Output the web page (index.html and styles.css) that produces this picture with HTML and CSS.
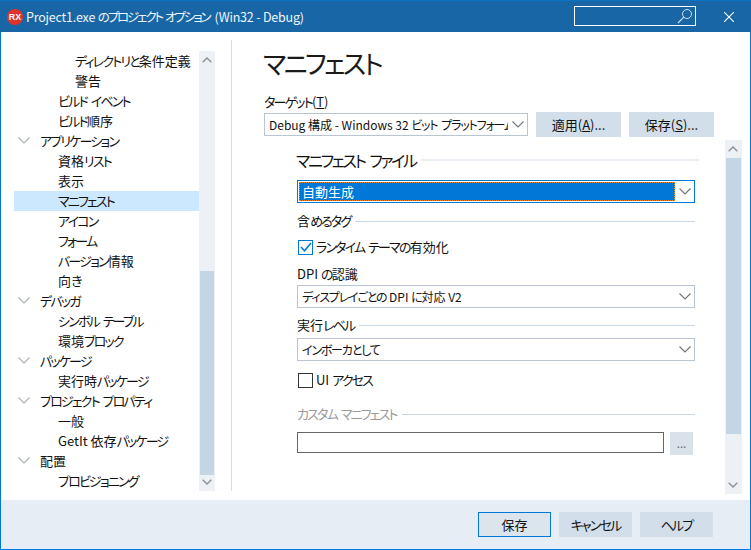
FILE: index.html
```html
<!DOCTYPE html>
<html lang="ja">
<head>
<meta charset="utf-8">
<title>Project1.exe のプロジェクト オプション</title>
<link rel="stylesheet" href="styles.css">
</head>
<body>
<svg class="defs" width="0" height="0"><defs>
<symbol id="chev" viewBox="0 0 12 7"><path d="M.5.5 6 6 11.5.5" fill="none" stroke="currentColor" stroke-width="1.1"/></symbol>
<symbol id="up" viewBox="0 0 10 6"><path d="M.7 5.3 5 1l4.300 4.300" fill="none" stroke="currentColor" stroke-width="1.400"/></symbol>
</defs></svg>
<div class="window">
  <header class="titlebar">
    <span class="logo">RX</span>
    <span class="title">Project1.exe <span class="k">のプロジェクト オプション</span>&nbsp; (Win32 - Debug)</span>
    <div class="search">
      <svg width="16" height="16" viewBox="0 0 16 16"><circle cx="10" cy="6" r="4.500" fill="none" stroke="#cfe0ee" stroke-width="1"/><path d="M6.800 9.200 1 15" stroke="#cfe0ee" stroke-width="1.200"/></svg>
    </div>
    <svg class="close" width="10" height="10" viewBox="0 0 10 10"><path d="M0 0 10 10M10 0 0 10" stroke="#fff" stroke-width="1.100"/></svg>
  </header>
  <div class="main">
    <aside class="nav">
      <ul class="tree">
        <li class="row l2"><span class="k">ディレクトリと</span>条件定義</li>
        <li class="row l2">警告</li>
        <li class="row l1"><span class="k">ビルド イベント</span></li>
        <li class="row l1"><span class="k">ビルド</span>順序</li>
        <li class="row group"><svg class="tw"><use href="#chev"/></svg><span class="k">アプリケーション</span></li>
        <li class="row l1">資格<span class="k">リスト</span></li>
        <li class="row l1">表示</li>
        <li class="row l1 selected"><span class="k">マニフェスト</span></li>
        <li class="row l1"><span class="k">アイコン</span></li>
        <li class="row l1"><span class="k">フォーム</span></li>
        <li class="row l1"><span class="k">バージョン</span>情報</li>
        <li class="row l1">向<span class="k">き</span></li>
        <li class="row group"><svg class="tw"><use href="#chev"/></svg><span class="k">デバッガ</span></li>
        <li class="row l1"><span class="k">シンボル テーブル</span></li>
        <li class="row l1">環境<span class="k">ブロック</span></li>
        <li class="row group"><svg class="tw"><use href="#chev"/></svg><span class="k">パッケージ</span></li>
        <li class="row l1">実行時<span class="k">パッケージ</span></li>
        <li class="row group"><svg class="tw"><use href="#chev"/></svg><span class="k">プロジェクト プロパティ</span></li>
        <li class="row l1">一般</li>
        <li class="row l1">GetIt 依存<span class="k">パッケージ</span></li>
        <li class="row group"><svg class="tw"><use href="#chev"/></svg>配置</li>
        <li class="row l1"><span class="k">プロビジョニング</span></li>
      </ul>
      <div class="sbar nav-sbar">
        <svg class="arrow"><use href="#up"/></svg>
        <div class="track"><div class="thumb"></div></div>
        <svg class="arrow down"><use href="#up"/></svg>
      </div>
    </aside>
    <section class="content">
      <h1 class="heading"><span class="k">マニフェスト</span></h1>
      <div class="target-label"><span class="k">ターゲット</span>(<u>T</u>)</div>
      <div class="target-row">
        <div class="select target-select"><span class="val">Debug 構成 - Windows 32 <span class="k">ビット プラットフォーム</span></span><svg class="chev"><use href="#chev"/></svg></div>
        <button class="btn">適用(<u>A</u>)...</button>
        <button class="btn">保存(<u>S</u>)...</button>
      </div>
      <div class="panel-wrap">
        <div class="panel">
          <div class="legend big"><span><span class="k">マニフェスト ファイル</span></span><i></i></div>
          <div class="select focus"><span class="val sel">自動生成</span><svg class="chev"><use href="#chev"/></svg></div>
          <div class="legend tag"><span>含<span class="k">めるタグ</span></span><i></i></div>
          <label class="check c1"><span class="box on"><svg width="12" height="10" viewBox="0 0 12 10"><path d="M1 5l3.500 3.800L11 1" fill="none" stroke="#0078d7" stroke-width="1.500"/></svg></span><span class="k">ランタイム テーマの</span>有効化</label>
          <div class="plain">DPI <span class="k">の</span>認識</div>
          <div class="select"><span class="val"><span class="k">ディスプレイごとの</span> DPI <span class="k">に</span>対応 V2</span><svg class="chev"><use href="#chev"/></svg></div>
          <div class="legend level"><span>実行<span class="k">レベル</span></span><i></i></div>
          <div class="select"><span class="val"><span class="k">インボーカとして</span></span><svg class="chev"><use href="#chev"/></svg></div>
          <label class="check c2"><span class="box"></span>UI <span class="k sp">アクセス</span></label>
          <div class="legend custom"><span><span class="k">カスタム マニフェスト</span></span><i></i></div>
          <div class="file-row"><div class="input"></div><button class="dots">...</button></div>
        </div>
        <div class="sbar main-sbar">
          <svg class="arrow"><use href="#up"/></svg>
          <div class="track"><div class="thumb"></div></div>
          <svg class="arrow down"><use href="#up"/></svg>
        </div>
      </div>
    </section>
  </div>
  <footer class="footer">
    <button class="btn fbtn default">保存</button>
    <button class="btn fbtn"><span class="k">キャンセル</span></button>
    <button class="btn fbtn"><span class="k">ヘルプ</span></button>
  </footer>
</div>
</body>
</html>
```
FILE: styles.css
```css
* { box-sizing: border-box; }
html, body { margin: 0; padding: 0; }
body {
  width: 751px; height: 550px; overflow: hidden; background: #fff;
  font: 13px/20px "Noto Sans CJK JP", sans-serif;
  font-feature-settings: "palt";
  color: #111;
}
.k { letter-spacing: -.14em; word-spacing: .2em; }
.sp { margin-left: 3px; }
.defs { position: absolute; }
.window {
  width: 751px; height: 550px; display: flex; flex-direction: column;
  border: 1px solid #0078d7; border-top: 0;
}
.titlebar {
  height: 32px; flex: none; margin: 0 -1px; display: flex; align-items: center;
  background: #1866a5; border-top: 1px solid #0a73c4; color: #fff; padding-left: 7px;
}
.logo {
  width: 16px; height: 16px; border-radius: 50%; background: #e3322b; color: #fff;
  font: bold 9px/16px "Liberation Sans", sans-serif; text-align: center; flex: none;
}
.title { margin-left: 3px; white-space: nowrap; flex: 1; color: #eef5fa; font-size: 12.500px; letter-spacing: -.2px; }
.title .k { letter-spacing: -.17em; }
.search {
  width: 122px; height: 20px; border: 1px solid #fff; display: flex; justify-content: flex-end;
  align-items: center; padding-right: 2px; flex: none; margin-top: -1px;
}
.close { margin: 0 17px 0 28px; flex: none; }
.main { flex: 1; display: flex; min-height: 0; }
.nav {
  width: 231px; flex: none; margin: 8px 0 9px; padding: 11px 15px 0 13px;
  border-right: 1px solid #d5dee6; display: flex;
}
.tree { list-style: none; margin: 0; padding: 0; width: 185px; flex: none; }
.row { height: 20px; line-height: 20px; white-space: nowrap; position: relative; }
.l1 { padding-left: 44px; }
.l2 { padding-left: 61px; }
.group { padding-left: 26px; }
.selected { background: #cce8ff; }
.tw { width: 12px; height: 7px; color: #a9b1b8; margin-left: -22px; margin-right: 10px; vertical-align: 2px; }
.sbar { width: 16px; flex: none; background: #edf1f5; display: flex; flex-direction: column; color: #8b9197; }
.arrow { width: 10px; height: 6px; flex: none; margin: 6px 3px 6px; }
.arrow.down { transform: rotate(180deg); }
.track { flex: 1; min-height: 0; }
.thumb { background: #c4d6e6; margin: 0 1px; }
.nav-sbar .track { padding-top: 202px; }
.nav-sbar .thumb { height: 204px; }
.content { flex: 1; min-width: 0; display: flex; flex-direction: column; padding: 0 10px 5px 32px; }
.heading { margin: 14px 0 0 -1px; font-size: 26px; line-height: 34px; font-weight: 400; height: 34px; color: #1a1a1a; }
.heading .k { letter-spacing: -.1em; }
.target-label { margin-top: 12px; height: 20px; }
.target-row { display: flex; align-items: center; gap: 8px; height: 25px; }
.select {
  height: 23px; border: 1px solid #b7c6d2; display: flex; align-items: center; background: #fff;
  padding: 0 3px 0 4px;
}
.select .val { flex: 1; min-width: 0; overflow: hidden; white-space: nowrap; font-size: 12px; }
.select .k { letter-spacing: -.1em; }
.chev { width: 12px; height: 7px; color: #6e7479; flex: none; margin-left: 4px; }
.target-select { width: 264px; }
.btn {
  width: 85px; height: 25px; border: 0; background: #d2deea; color: #111; padding: 0;
  font: inherit; font-feature-settings: inherit; line-height: 25px;
}
.panel-wrap { flex: 1; display: flex; margin-top: 3px; min-height: 0; }
.panel { width: 398px; margin-left: 33px; flex: none; }
.legend { display: flex; align-items: center; gap: 5px; }
.legend span { white-space: nowrap; }
.legend i { flex: 1; height: 1px; background: #c8d8e6; }
.big { font-size: 16px; height: 24px; margin: 8px -4px 0 -1px; }
.big i { height: 2px; background: #e8eef4; }
.focus { border-color: #0078d7; margin-top: 8px; padding: 1px 3px 1px 1px; }
.select .sel { background: #0078d7; color: #fff; height: 19px; line-height: 19px; font-size: 13px; outline: 1px dotted #f08a1d; outline-offset: -1px; padding-left: 3px; }
.tag { height: 20px; margin-top: 8px; }
.check { display: flex; align-items: center; height: 20px; }
.box { width: 15px; height: 15px; border: 1px solid #333; margin: 0 3px 0 1px; display: flex; align-items: center; justify-content: center; flex: none; }
.box.on { border-color: #0078d7; }
.c1 { margin-top: 6px; }
.plain { margin-top: 7px; height: 20px; }
.level { margin-top: 7px; height: 20px; }
.level + .select { margin-top: 3px; }
.plain + .select { margin-top: 1px; }
.c2 { margin-top: 9px; }
.custom { margin-top: 14px; height: 20px; color: #9a9a9a; }
.file-row { display: flex; gap: 6px; margin-top: 8px; }
.input { width: 367px; height: 21px; border: 1px solid #666; }
.dots { width: 23px; height: 23px; border: 0; background: #d9e1e9; color: #6a7075; font: 12px/20px "Noto Sans", sans-serif; padding: 0; }
.main-sbar { width: 17px; margin-left: 30px; height: 354px; }
.main-sbar .thumb { height: 276px; }
.main-sbar .arrow { margin-left: 3px; }
.footer {
  height: 49px; flex: none; background: #e6edf4; display: flex; gap: 8px;
  padding: 12px 37px 0 0; justify-content: flex-end;
}
.fbtn { width: 73px; }
.default { background: #dce4ec; border: 1px solid #0078d7; line-height: 23px; }
```
